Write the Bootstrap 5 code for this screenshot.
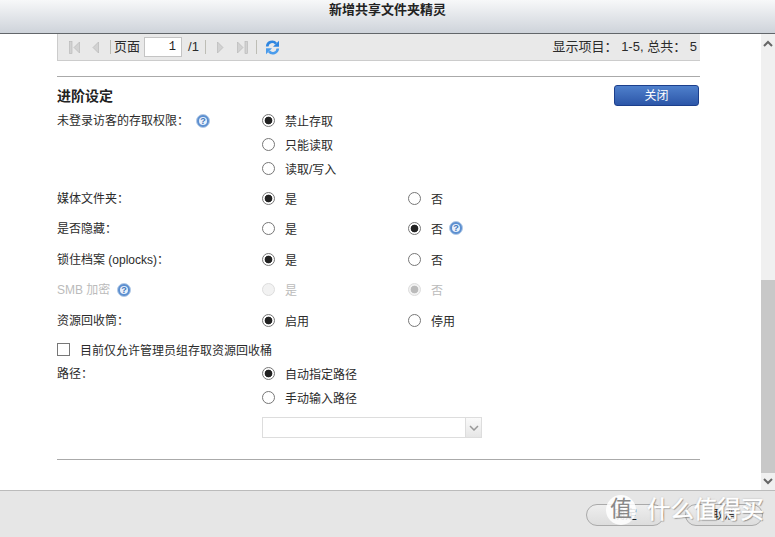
<!DOCTYPE html>
<html lang="zh-CN">
<head>
    <meta charset="UTF-8">
    <meta name="viewport" content="width=device-width, initial-scale=1">
    <title>新增共享文件夹精灵</title>
    <link href="https://cdn.jsdelivr.net/npm/bootstrap@5.3.0/dist/css/bootstrap.min.css" rel="stylesheet">
    <style>
        html, body { height: 100%; overflow: hidden; }
        body {
            background: #fff;
            color: #2b2b2b;
            font: 12px/16px "Liberation Sans", "Noto Sans CJK SC", sans-serif;
        }
        .wiz { height: 537px; position: relative; }
        .wiz-head {
            height: 34px;
            padding-top: 2px;
            background: linear-gradient(#f7f8f9, #ced3da);
            border-bottom: 1px solid #62666a;
            font-size: 13px;
            font-weight: 700;
            text-align: center;
            color: #222;
        }
        .wiz-body { height: 456px; }
        .wiz-main { width: 761px; padding-left: 57px; }
        .wiz-inner { width: 643px; }

        /* scrollbar */
        .sbar { width: 14px; background: #f0f0f0; }
        .sbar-top { height: 246px; padding: 6px 0 0 2px; }
        .sbar-thumb { height: 193px; background: #c8c8c8; }
        .sbar-bot { height: 17px; padding: 5px 0 0 2px; }

        /* pager */
        .pager-bar {
            height: 27px;
            background: #e9e9e9;
            border-left: 1px solid #ccc;
            border-bottom: 1px solid #ccc;
            padding: 0 3px 0 11px;
            font-size: 13px;
        }
        .pg-sep { width: 1px; height: 14px; background: #bdbdb5; }
        .pg-icon { fill: #d2d2d2; stroke: #b4b4b4; stroke-width: .6; }
        .pg-input {
            width: 38px;
            height: 20px;
            padding: 0 5px 0 0;
            border: 1px solid #c4c4c4;
            border-radius: 0;
            text-align: right;
            font-size: 12px;
            font-family: "Liberation Mono", monospace;
            color: #222;
        }
        .m-3px { margin-left: 3px; }
        .m-4px { margin-left: 4px; }
        .m-6px { margin-left: 6px; }
        .m-8px { margin-left: 8px; }
        .m-11px { margin-left: 11px; }
        .m-12px { margin-left: 12px; }
        .m-13px { margin-left: 13px; }
        .rule { height: 1px; background: #aaa; opacity: 1; border: 0; margin: 0; }
        .rule-top { margin: 15px 0 7px; }
        .rule-bot { margin-top: 21px; }

        .title-row { height: 24px; }
        .title-txt { font-size: 14px; font-weight: 700; color: #222; margin-top: 4px; }
        .btn-close-blue {
            width: 85px;
            height: 21px;
            margin: 1px 1px 0 0;
            padding: 0;
            font-size: 12px;
            line-height: 18px;
            color: #fff;
            border: 1px solid #1c3f8c;
            border-radius: 3px;
            background: linear-gradient(#4f80cc, #2c56a8);
        }

        /* option rows */
        .opt-row { height: 24px; }
        .opt-gap { margin-top: 6px; }
        .opt-gap7 { margin-top: 7px; }
        .opt-gap5 { margin-top: 5px; }
        .opt-label { width: 205px; padding-top: 2px; }
        .opt-a { width: 146px; }
        .opt-b { width: 150px; }
        .opt-off { color: #bbb; }
        .form-check-input.rad {
            width: 13px;
            height: 13px;
            margin: 0 10px 0 0;
            flex: none;
            background-color: #fff;
            border: 1px solid #777;
            opacity: 1;
        }
        .form-check-input.rad:checked {
            background-color: #fff;
            border-color: #777;
            background-image: radial-gradient(circle, #222 0, #222 3.5px, transparent 4.2px);
        }
        .form-check-input.rad:disabled { border-color: #ddd; background-color: #f2f2f2; }
        .form-check-input.rad:disabled:checked {
            background-image: radial-gradient(circle, #bbb 0, #bbb 3.5px, transparent 4.2px);
        }
        .form-check-input.chk {
            width: 13px;
            height: 13px;
            margin: 0 10px 0 0;
            border: 1px solid #777;
            border-radius: 0;
        }
        .opt-txt { padding-top: 4px; }
        .help { width: 14px; height: 14px; flex: none; }
        .help-gap { gap: 7px; }
        .help-off { margin-left: 5px; }

        .path-box { width: 220px; height: 21px; margin: 8px 0 0 205px; flex-wrap: nowrap; }
        .path-box .form-control {
            height: 21px;
            min-height: 0;
            padding: 0;
            border: 1px solid #ddd;
            border-radius: 0;
            background: #fff;
        }
        .path-box .input-group-text {
            width: 17px;
            padding: 0 0 0 3px;
            border: 1px solid #ddd;
            border-radius: 0;
            background: linear-gradient(#fafafa, #e6e6e6);
        }

        /* footer */
        .wiz-foot {
            height: 47px;
            background: #e6e6e6;
            border-top: 1px solid #bbb;
            padding: 13px 12px 0 0;
        }
        .btn-foot {
            width: 78px;
            height: 22px;
            padding: 0;
            font-size: 12px;
            line-height: 20px;
            color: #222;
            border: 1px solid #aaa;
            border-radius: 11px;
            background: linear-gradient(#eeeeee, #dddddd);
        }
        .gap-foot { gap: 21px; }

        /* watermark */
        .wm-dot {
            position: absolute;
            left: 606px;
            top: 495px;
            width: 30px;
            height: 30px;
            border-radius: 50%;
            background: rgba(255, 255, 255, .86);
            color: #888;
            font-size: 22px;
            line-height: 28px;
            text-align: center;
        }
        .wm-txt {
            position: absolute;
            left: 647px;
            top: 496px;
            font-size: 23.4px;
            line-height: 28px;
            white-space: nowrap;
            color: #fff;
            -webkit-text-stroke: .5px #fff;
            text-shadow: 1px 1px 1px rgba(0, 0, 0, .32), 0 0 2px rgba(0, 0, 0, .25);
        }
    </style>
</head>
<body>
<svg width="0" height="0" class="position-absolute">
    <defs>
        <symbol id="helpIcon" viewBox="0 0 14 14">
            <circle cx="7" cy="7" r="6.500" fill="#5c8fd0" stroke="#b4cbe6"/>
            <circle cx="7" cy="7" r="4" fill="#e8f0fa"/>
            <text x="7" y="10.200" text-anchor="middle" font-size="9" font-weight="700" font-family="Liberation Sans" fill="#3f77bd">?</text>
        </symbol>
    </defs>
</svg>

<div class="wiz d-flex flex-column">
    <div class="wiz-head">新增共享文件夹精灵</div>

    <div class="wiz-body d-flex">
        <div class="wiz-main">
            <div class="wiz-inner">
                <div class="pager-bar d-flex align-items-center">
                    <svg width="11" height="13" viewBox="0 0 11 13"><rect class="pg-icon" x=".5" y=".5" width="2.500" height="12"/><path class="pg-icon" d="M10.500 1v11L5 6.500z"/></svg>
                    <svg class="m-12px" width="7" height="13" viewBox="0 0 7 13"><path class="pg-icon" d="M6.500 1v11L1 6.500z"/></svg>
                    <span class="pg-sep m-11px"></span>
                    <span class="m-3px">页面</span>
                    <input class="form-control pg-input m-4px" type="text" value="1">
                    <span class="m-6px">/1</span>
                    <span class="pg-sep m-6px"></span>
                    <svg class="m-11px" width="7" height="13" viewBox="0 0 7 13"><path class="pg-icon" d="M.5 1v11L6 6.500z"/></svg>
                    <svg class="m-13px" width="11" height="13" viewBox="0 0 11 13"><path class="pg-icon" d="M.5 1v11L6 6.500z"/><rect class="pg-icon" x="8" y=".5" width="2.500" height="12"/></svg>
                    <span class="pg-sep m-8px"></span>
                    <svg class="m-8px" width="15" height="15" viewBox="0 0 15 15">
                        <path d="M2.200 6.500A5 5 0 0 1 11 3.600" fill="none" stroke="#2f86e0" stroke-width="2.600"/>
                        <path d="M14 .8v6H8z" fill="#2f86e0"/>
                        <path d="M12.800 8.500A5 5 0 0 1 4 11.400" fill="none" stroke="#4a9cec" stroke-width="2.600"/>
                        <path d="M1 14.200v-6h6z" fill="#4a9cec"/>
                    </svg>
                    <span class="ms-auto">显示项目： 1-5, 总共： 5</span>
                </div>

                <hr class="rule rule-top">

                <div class="title-row d-flex align-items-start justify-content-between">
                    <span class="title-txt">进阶设定</span>
                    <button type="button" class="btn btn-close-blue">关闭</button>
                </div>

                <div class="opt-row d-flex align-items-center">
                    <div class="opt-label d-flex align-items-center help-gap"><span>未登录访客的存取权限：</span><svg class="help"><use href="#helpIcon"/></svg></div>
                    <label class="d-flex align-items-center"><input class="form-check-input rad" type="radio" name="guest" checked><span class="opt-txt">禁止存取</span></label>
                </div>
                <div class="opt-row d-flex align-items-center">
                    <div class="opt-label"></div>
                    <label class="d-flex align-items-center"><input class="form-check-input rad" type="radio" name="guest"><span class="opt-txt">只能读取</span></label>
                </div>
                <div class="opt-row d-flex align-items-center">
                    <div class="opt-label"></div>
                    <label class="d-flex align-items-center"><input class="form-check-input rad" type="radio" name="guest"><span class="opt-txt">读取/写入</span></label>
                </div>

                <div class="opt-row opt-gap d-flex align-items-center">
                    <div class="opt-label">媒体文件夹：</div>
                    <label class="opt-a d-flex align-items-center"><input class="form-check-input rad" type="radio" name="media" checked><span class="opt-txt">是</span></label>
                    <label class="opt-b d-flex align-items-center"><input class="form-check-input rad" type="radio" name="media"><span class="opt-txt">否</span></label>
                </div>
                <div class="opt-row opt-gap d-flex align-items-center">
                    <div class="opt-label">是否隐藏：</div>
                    <label class="opt-a d-flex align-items-center"><input class="form-check-input rad" type="radio" name="hide"><span class="opt-txt">是</span></label>
                    <label class="opt-b d-flex align-items-center"><input class="form-check-input rad" type="radio" name="hide" checked><span class="opt-txt">否</span><svg class="help m-6px"><use href="#helpIcon"/></svg></label>
                </div>
                <div class="opt-row opt-gap7 d-flex align-items-center">
                    <div class="opt-label">锁住档案 (oplocks)：</div>
                    <label class="opt-a d-flex align-items-center"><input class="form-check-input rad" type="radio" name="oplocks" checked><span class="opt-txt">是</span></label>
                    <label class="opt-b d-flex align-items-center"><input class="form-check-input rad" type="radio" name="oplocks"><span class="opt-txt">否</span></label>
                </div>
                <div class="opt-row opt-gap opt-off d-flex align-items-center">
                    <div class="opt-label d-flex align-items-center help-gap"><span>SMB 加密</span><svg class="help"><use href="#helpIcon"/></svg></div>
                    <label class="opt-a d-flex align-items-center"><input class="form-check-input rad" type="radio" name="smb" disabled><span class="opt-txt">是</span></label>
                    <label class="opt-b d-flex align-items-center"><input class="form-check-input rad" type="radio" name="smb" checked disabled><span class="opt-txt">否</span></label>
                </div>
                <div class="opt-row opt-gap7 d-flex align-items-center">
                    <div class="opt-label">资源回收筒：</div>
                    <label class="opt-a d-flex align-items-center"><input class="form-check-input rad" type="radio" name="bin" checked><span class="opt-txt">启用</span></label>
                    <label class="opt-b d-flex align-items-center"><input class="form-check-input rad" type="radio" name="bin"><span class="opt-txt">停用</span></label>
                </div>
                <div class="opt-row opt-gap5 d-flex align-items-center">
                    <label class="d-flex align-items-center"><input class="form-check-input chk" type="checkbox"><span class="opt-txt">目前仅允许管理员组存取资源回收桶</span></label>
                </div>
                <div class="opt-row d-flex align-items-center">
                    <div class="opt-label">路径：</div>
                    <label class="d-flex align-items-center"><input class="form-check-input rad" type="radio" name="path" checked><span class="opt-txt">自动指定路径</span></label>
                </div>
                <div class="opt-row d-flex align-items-center">
                    <div class="opt-label"></div>
                    <label class="d-flex align-items-center"><input class="form-check-input rad" type="radio" name="path"><span class="opt-txt">手动输入路径</span></label>
                </div>
                <div class="input-group path-box">
                    <input class="form-control" type="text" disabled>
                    <span class="input-group-text">
                        <svg width="10" height="6" viewBox="0 0 10 6"><path d="M1 1l4 4 4-4" fill="none" stroke="#999" stroke-width="1.500"/></svg>
                    </span>
                </div>

                <hr class="rule rule-bot">
            </div>
        </div>

        <div class="sbar d-flex flex-column">
            <div class="sbar-top">
                <svg class="d-block" width="10" height="7" viewBox="0 0 10 7"><path d="M1 6l4-4 4 4" fill="none" stroke="#666" stroke-width="2"/></svg>
            </div>
            <div class="sbar-thumb"></div>
            <div class="sbar-bot">
                <svg class="d-block" width="10" height="7" viewBox="0 0 10 7"><path d="M1 1l4 4 4-4" fill="none" stroke="#666" stroke-width="2"/></svg>
            </div>
        </div>
    </div>

    <div class="wiz-foot d-flex justify-content-end gap-foot">
        <button type="button" class="btn btn-foot">确定</button>
        <button type="button" class="btn btn-foot">取消</button>
    </div>

    <div class="wm-dot">值</div>
    <div class="wm-txt">什么值得买</div>
</div>

<script src="https://cdn.jsdelivr.net/npm/bootstrap@5.3.0/dist/js/bootstrap.bundle.min.js"></script>
</body>
</html>
